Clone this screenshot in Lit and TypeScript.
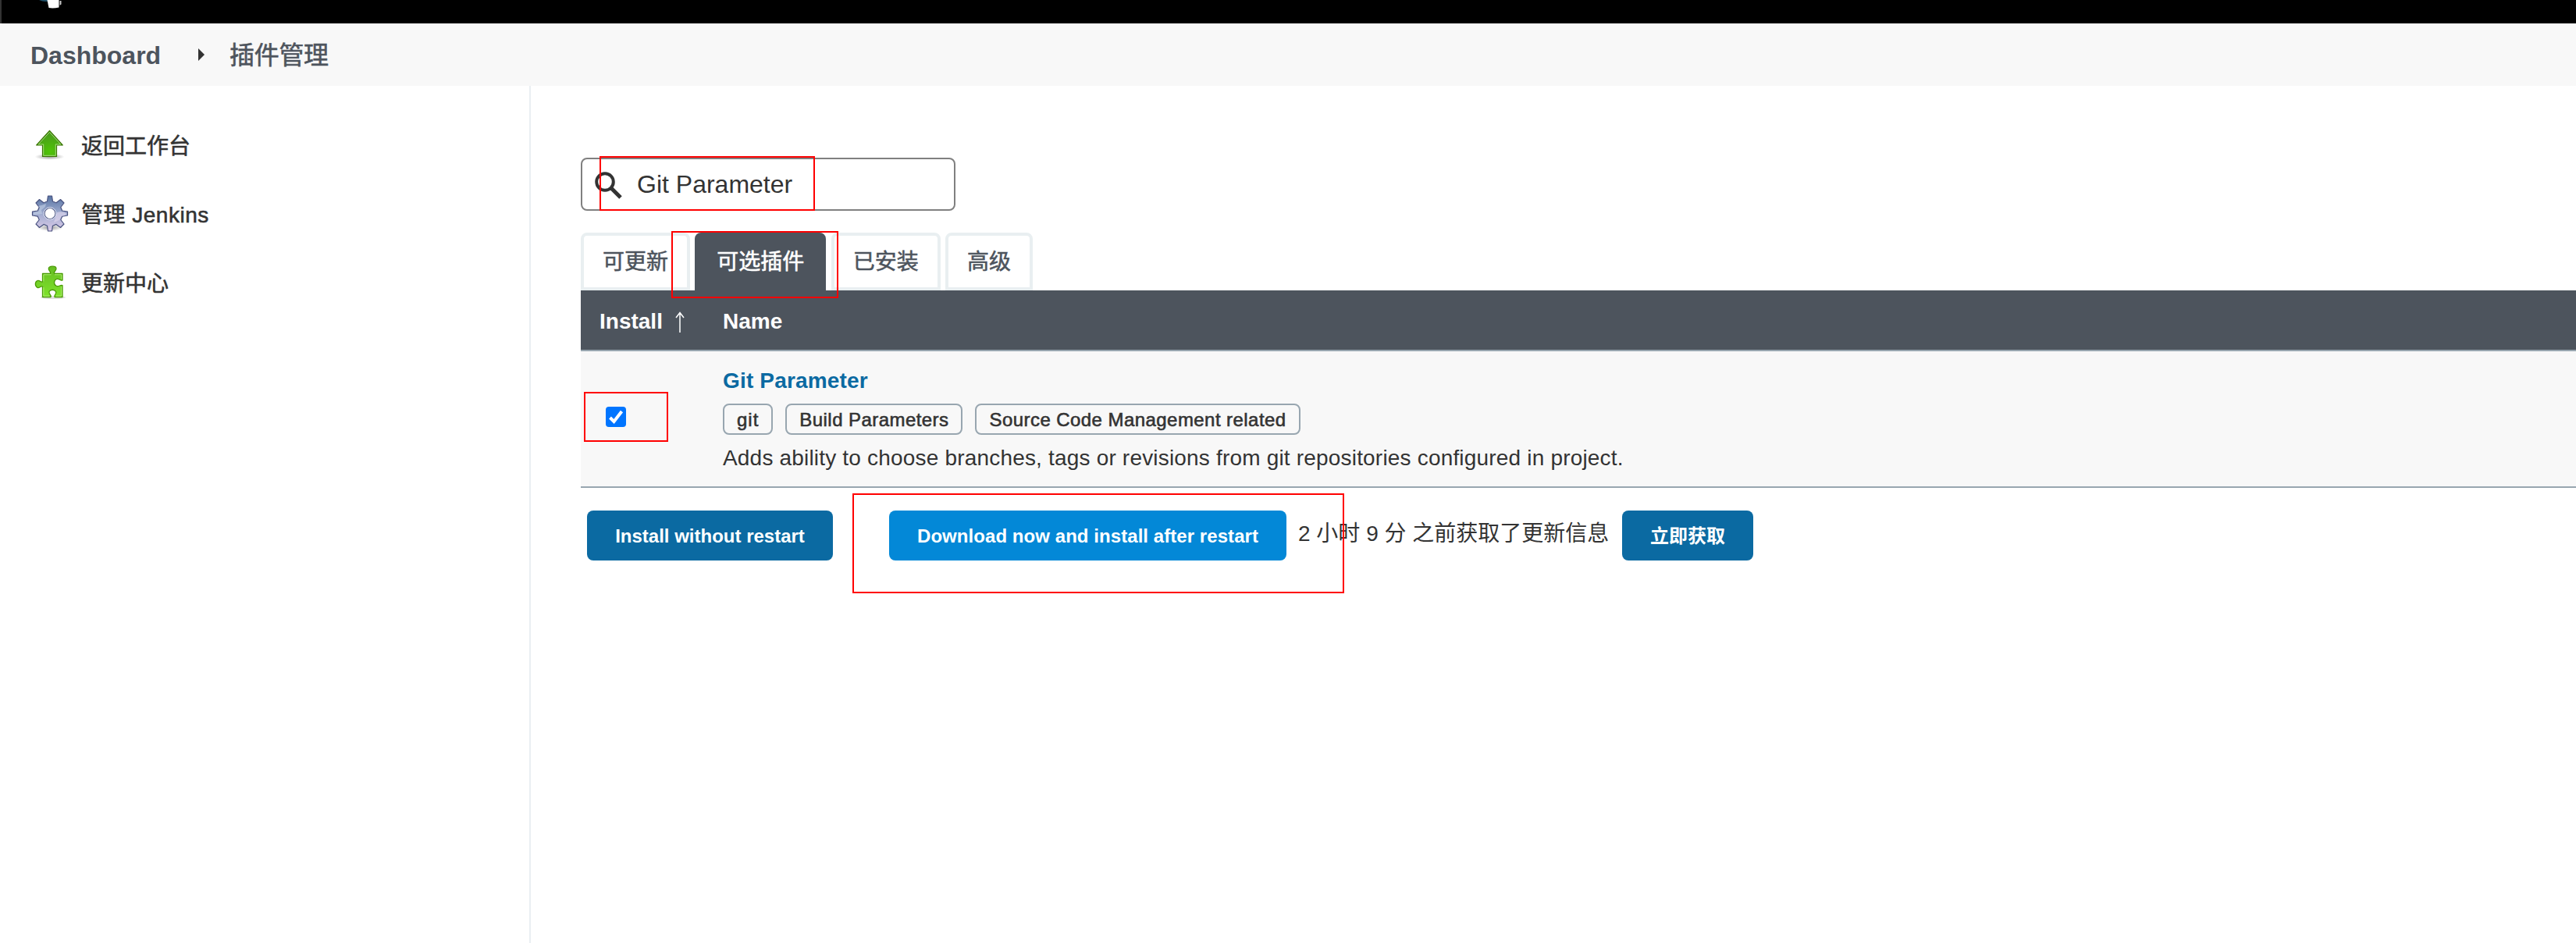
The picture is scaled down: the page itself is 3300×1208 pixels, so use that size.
import { LitElement, html, css, svg } from "lit";
import { customElement } from "lit/decorators.js";

const upArrow = svg`
  <defs>
    <radialGradient id="up" cx="0.5" cy="0.8" r="0.7"><stop offset="0" stop-color="#4fc407"/><stop offset="1" stop-color="#4a9a1c"/></radialGradient>
    <radialGradient id="sh"><stop offset="0" stop-color="#000" stop-opacity=".4"/><stop offset="1" stop-color="#000" stop-opacity="0"/></radialGradient>
  </defs>
  <ellipse cx="23.5" cy="38.800" rx="19" ry="4" fill="url(#sh)"/>
  <path d="M23.5 5.300 L40.300 24 H32.500 V38.500 H14.500 V24 H6.700 Z" fill="url(#up)" stroke="#3a7304" stroke-width="1.200" stroke-linejoin="round"/>
  <path d="M23.5 7.300 L37.900 22.900 H31.300 V37.300 H15.700 V22.900 H9.100 Z" fill="none" stroke="#a4dc7c" stroke-width="1"/>`;

const gear = svg`
  <defs>
    <linearGradient id="gr" x1="0" y1="0" x2="0" y2="1"><stop offset="0" stop-color="#5673a2"/><stop offset=".5" stop-color="#a0acd0"/><stop offset="1" stop-color="#dccbe8"/></linearGradient>
    <radialGradient id="sg"><stop offset="0" stop-color="#000" stop-opacity=".4"/><stop offset="1" stop-color="#000" stop-opacity="0"/></radialGradient>
  </defs>
  <ellipse cx="24" cy="41.500" rx="17" ry="4.500" fill="url(#sg)"/>
  <path fill-rule="evenodd" fill="url(#gr)" stroke="#4a5380" stroke-width="1.200" stroke-linejoin="round"
    d="M21.500 1 H26.500 L27.500 8 L32 9.800 L37.500 5.500 L42 10 L37.800 15.500 L39.700 20 L46.500 21.200 V26 L39.700 27.200 L37.800 31.500 L42 37 L37.500 41.500 L32 37.400 L27.500 39.200 L26.500 46 H21.500 L20.500 39.200 L16 37.400 L10.500 41.500 L6 37 L10.200 31.500 L8.300 27.200 L1.500 26 V21.200 L8.300 20 L10.200 15.500 L6 10 L10.500 5.500 L16 9.800 L20.500 8 Z M24 16.500 A7 7 0 1 0 24 30.500 A7 7 0 1 0 24 16.500 Z"/>
  <path d="M9 14 Q14 13 19 11 L18 15 L13 19 L14 24 L3 25 V22 L9 21 L11 16 Z" fill="#c3d0e6" opacity=".6"/>
  <path d="M33 22 Q39 20 45 23 L44 26 L39 27 L36 32 L29 35 L31 29 Z" fill="#e3d9ef" opacity=".6"/>
  <circle cx="24" cy="23.500" r="7.900" fill="none" stroke="#dfe4f2" stroke-width="1"/>`;

const puzzle = svg`
  <defs><linearGradient id="pz" x1="0" y1="0" x2="0" y2="1"><stop offset="0" stop-color="#66bd22"/><stop offset="1" stop-color="#7fe32c"/></linearGradient></defs>
  <ellipse cx="28" cy="43" rx="16" ry="2" fill="#000" opacity=".12"/>
  <path fill="url(#pz)" stroke="#4a9a06" stroke-width="1.300" stroke-linejoin="round"
    d="M14.500 12.500 H24.500 C25.500 9.500 22 9 22.300 6 C22.500 2.500 31.800 2 32 6 C32 9 28.500 9.500 29.500 12.500 H40 V21 C37 22 36 18.500 32.500 19.500 C28.500 21 28.500 27 32.500 28.500 C36 29.500 37 26.500 40 27.500 V42.500 H30 C29 39 33 39 31.500 35.500 C30 32.500 24.500 32.500 23 35.500 C22 39 26 39 25 42.500 H14.500 V29 C12 28 10.500 31.500 8 30.500 C4.500 28.500 4.500 23 8 21.500 C11 20.500 12 24 14.500 23 Z"/>
  <path fill="none" stroke="#b4f07a" stroke-width=".9" d="M15.800 22.500 V13.800 H25.500 M30 13.800 H38.700 V20 M15.800 30 V41.200 H23.500 M38.700 29 V41.200 H31.500"/>`;

@customElement("app-root")
export class AppRoot extends LitElement {
  static styles = css`
    :host { display: block; position: relative; height: 1208px; overflow: hidden; background: #fff; color: #333;
      font: 28px/40px "Liberation Sans", "Noto Sans CJK SC", sans-serif; }
    * { box-sizing: border-box; }
    svg { display: block; }
    .top { height: 30px; background: #000; border-left: 2px solid #333; padding-left: 46px; }
    .crumbs { height: 80px; background: #f8f8f8; display: flex; align-items: center; padding-left: 39px;
      font-size: 32px; font-weight: 700; color: #4d545d; }
    .crumbs span { padding-top: 1px; }
    .crumbs .dash { width: 215px; }
    .crumbs svg { margin-right: 31px; }
    .crumbs .cur, .side span, .tab { font-weight: 400; -webkit-text-stroke: 0.55px currentColor; }
    .crumbs .cur { letter-spacing: -0.3px; }
    .body { display: flex; height: 1098px; }
    .side { width: 680px; border-right: 2px solid #eaeff2; padding: 32px 0 0 40px; }
    .side .task { display: flex; align-items: center; height: 88px; gap: 16px; }
    .side span { padding-top: 3px; }
    .side .latin { letter-spacing: 0.5px; }
    .main { flex: 1; padding: 92px 0 0 64px; }
    .search { width: 480px; height: 68px; border: 2px solid #808080; border-radius: 8px; display: flex; align-items: center;
      padding-left: 15px; font-size: 32px; }
    .search svg { margin: 2px 19px 0 0; }
    .tabs { display: flex; gap: 6.300px; margin-top: 28px; height: 74px; }
    .tab { border: 4px solid #e9eff1; border-radius: 8px 8px 0 0; padding: 2px 24px 0; line-height: 64px; color: #4d545d; white-space: nowrap; }
    .tab.active { background: #4d545d; border-color: #4d545d; color: #fff; }
    .head { height: 78px; background: #4d545d; border-bottom: 2px solid #98a6b0; color: #fff; font-weight: 700;
      display: flex; align-items: center; padding: 3px 0 0 24px; }
    .head .inst { width: 158px; display: flex; align-items: center; gap: 15px; }
    .row { height: 175px; background: #f8f8f8; border-bottom: 2px solid #98a6b0; display: flex; }
    .check { width: 182px; padding: 71px 0 0 32px; }
    .title { font-weight: 700; color: #0b6aa2; margin-top: 18px; letter-spacing: 0.17px; }
    .tags { display: flex; gap: 16px; margin-top: 9px; }
    .tag { height: 40px; border: 2px solid #98a6b0; border-radius: 8px; padding: 0 16px; font-size: 24px; line-height: 37px;
      letter-spacing: 0.44px; -webkit-text-stroke: 0.6px currentColor; white-space: nowrap; }
    .tag.short { letter-spacing: 1px; }
    .desc { margin-top: 10px; white-space: nowrap; letter-spacing: 0.185px; }
    .actions { display: flex; padding: 29px 0 0 8px; }
    .btn { height: 64px; border-radius: 8px; background: #0b6aa2; color: #fff; font-size: 24px; font-weight: 700;
      line-height: 66px; text-align: center; white-space: nowrap; width: 315px; }
    .btn.now { width: 509px; margin-left: 72px; background: #0388d7; letter-spacing: 0.06px; }
    .btn.get { width: 168px; }
    .info { width: 430px; padding: 10px 0 0 15px; white-space: nowrap; }
    .mark { position: absolute; border: 2px solid #f00; }
    .m1 { left: 768px; top: 200px; width: 276px; height: 70px; }
    .m2 { left: 860px; top: 296px; width: 214px; height: 86px; }
    .m3 { left: 748px; top: 502px; width: 108px; height: 64px; }
    .m4 { left: 1092px; top: 632px; width: 630px; height: 128px; }
  `;

  render() {
    return html`
      <div class="top">
        <svg width="34" height="14" viewBox="0 0 34 14"><path d="M2 0H13V2Q7 2.500 2 0Z" fill="#1f5068"/><path d="M12.500 0H27.500V9.500Q20 11 14.500 10Z" fill="#fff"/><path d="M28.500 1H30.500V5.500L28.500 7Z" fill="#ccc"/></svg>
      </div>
      <div class="crumbs">
        <span class="dash">Dashboard</span>
        <svg width="9" height="16" viewBox="0 0 9 16"><path d="M0 0L8 8L0 16Z" fill="#333"/></svg>
        <span class="cur">插件管理</span>
      </div>
      <div class="body">
        <div class="side">
          <div class="task"><svg width="48" height="48">${upArrow}</svg><span>返回工作台</span></div>
          <div class="task"><svg width="48" height="48">${gear}</svg><span class="latin">管理 Jenkins</span></div>
          <div class="task"><svg width="48" height="48">${puzzle}</svg><span>更新中心</span></div>
        </div>
        <div class="main">
          <div class="search">
            <svg width="36" height="36" viewBox="0 0 36 36" fill="none" stroke="#333"><circle cx="14" cy="14" r="10.800" stroke-width="4"/><path d="M22.500 22.500L34 34" stroke-width="5"/></svg>
            <span>Git Parameter</span>
          </div>
          <div class="tabs">
            <div class="tab">可更新</div>
            <div class="tab active">可选插件</div>
            <div class="tab">已安装</div>
            <div class="tab">高级</div>
          </div>
          <div class="head">
            <div class="inst"><span>Install</span>
              <svg width="14" height="28" viewBox="0 0 14 28" fill="none" stroke="#fff" stroke-width="1.500"><path d="M7 28V3M2 9L7 2.500L12 9"/></svg>
            </div>
            <span>Name</span>
          </div>
          <div class="row">
            <div class="check">
              <svg width="26" height="26" viewBox="0 0 26 26"><rect width="26" height="26" rx="4" fill="#0075ff"/><path d="M5.500 14L10.500 19L20.500 6" fill="none" stroke="#fff" stroke-width="4"/></svg>
            </div>
            <div>
              <div class="title">Git Parameter</div>
              <div class="tags"><span class="tag short">git</span><span class="tag">Build Parameters</span><span class="tag">Source Code Management related</span></div>
              <div class="desc">Adds ability to choose branches, tags or revisions from git repositories configured in project.</div>
            </div>
          </div>
          <div class="actions">
            <div class="btn">Install without restart</div>
            <div class="btn now">Download now and install after restart</div>
            <div class="info">2 小时 9 分 之前获取了更新信息</div>
            <div class="btn get">立即获取</div>
          </div>
        </div>
      </div>
      <div class="mark m1"></div><div class="mark m2"></div><div class="mark m3"></div><div class="mark m4"></div>
    `;
  }
}
